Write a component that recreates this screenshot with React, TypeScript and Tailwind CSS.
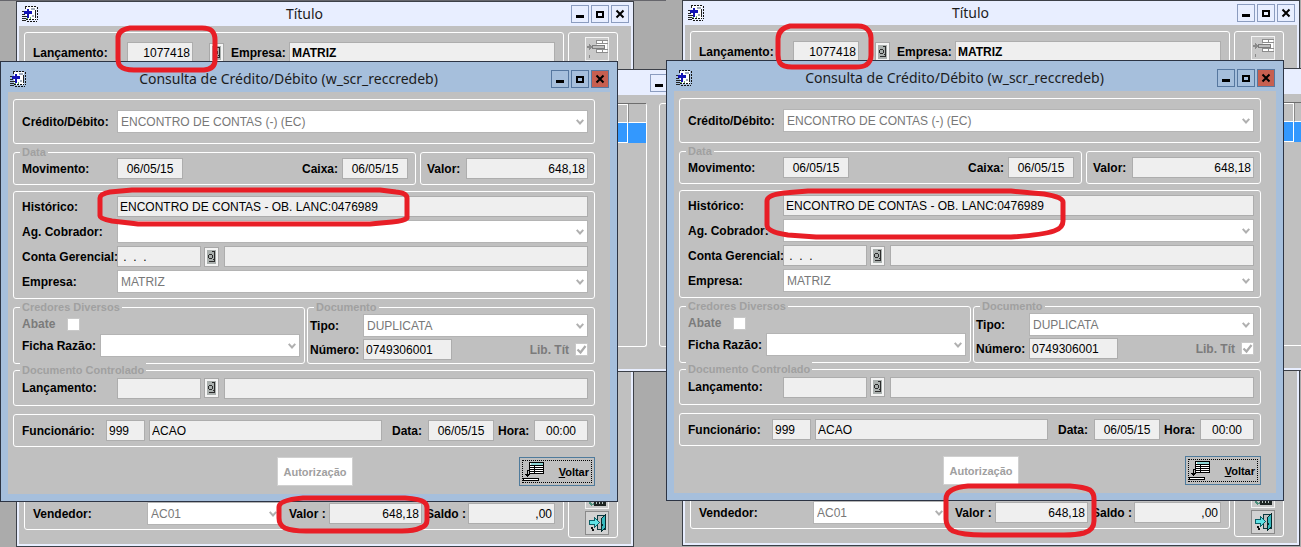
import { useId, type ReactNode } from "react";
import clsx from "clsx";

const labelText = "text-xs leading-4 font-bold whitespace-nowrap";

function AppIcon() {
  return (
    <svg width="16" height="16" viewBox="0 0 16 16" shapeRendering="crispEdges" aria-hidden="true">
      <path d="M4 1h10v13H4z" fill="#fff" />
      <path
        d="M3 .5h12M15.500 1v13M5 15.500h10M4 13.500h10"
        stroke="#111"
        strokeWidth="1"
        strokeDasharray="2 1"
        fill="none"
      />
      <path d="M3.500 0v3M13.500 4v8M0 5.500h3M0 8.500h3M0 10.500h5M0 12.500h5M0 14.500h4" stroke="#222" fill="none" />
      <path d="M5 3h2v2h3v3H7v4H5V8H2V5h3z" fill="#1414b4" />
      <path d="M9 2h4v2H9zM10 9h2v2h-2z" fill="#a3adbb" />
      <path d="M4 12h2v1H4zM8 11h1v2H8z" fill="#6cae72" />
    </svg>
  );
}

function SearchGlyph() {
  return (
    <svg width="9" height="14" viewBox="0 0 9 14" shapeRendering="crispEdges" aria-hidden="true">
      <path d="M0 0h9v14H0z" fill="#aab0ae" />
      <path d="M2 4h3v1H2zM1 5h1v3H1zM2 8h3v1H2zM5 5h1v3H5zM5 1h3v1H5zM7 2h1v9H7zM2 11h6v1H2zM6 9h1v1H6z" fill="#2b2b2b" />
    </svg>
  );
}

function InsertRowGlyph() {
  return (
    <svg width="21" height="20" viewBox="0 0 21 20" shapeRendering="crispEdges" aria-hidden="true">
      <path d="M10 1h10v12H10z" fill="#fff" />
      <path d="M9.500 1.500h11M9.500 4.500h11M9.500 10.500h11M9.500 13.500h11M9.500 1v4M15.500 1v4M9.500 10v4M15.500 10v4" stroke="#8d8d8d" fill="none" />
      <path d="M5.500 6.500h12v3h-12z" fill="#c0c0c0" stroke="#7d7d7d" />
      <path d="M0 7h2V5h1v1h1v1h1v2H4v1H3v1H2V9H0zM2 16h1v3H2z" fill="#8a8a8a" />
    </svg>
  );
}

function ReturnGlyph() {
  return (
    <svg width="22" height="20" viewBox="0 0 22 20" shapeRendering="crispEdges" aria-hidden="true">
      <path d="M7 1h14v11H7z" fill="#fff" />
      <path d="M8 1h12v2H8z" fill="#8fd6d6" />
      <path d="M6.500 .5h14v11h-14zM7 3.500h14M7 5.500h14M7 7.500h14M7 9.500h14M11.500 3v9" stroke="#000" fill="none" />
      <path d="M7 8.500H4.500V14" stroke="#000" fill="none" />
      <path d="M2 12h5v1H6v1H5v1H4v-1H3v-1H2z" fill="#000" />
      <path d="M.5 16.500h15v2H.5z" fill="#fff" stroke="#000" />
    </svg>
  );
}

function DoorGlyph() {
  return (
    <svg width="19" height="19" viewBox="0 0 19 19" shapeRendering="crispEdges" aria-hidden="true">
      <path d="M9.500 1.500h8v14h-8z" fill="#c0c0c0" stroke="#0b3a40" />
      <path d="M13 5l4-4v13l-4 4z" fill="#35b9bd" stroke="#05282c" />
      <path d="M14 10h1v2h-1z" fill="#05282c" />
      <path d="M1.500 6.500h5v-3l5 5-5 5v-3h-5z" fill="#5fe3e6" stroke="#0c5f66" />
      <path d="M3 13h2v2H3zM4 15h2v2H4z" fill="#111" />
    </svg>
  );
}

function PrintGlyph() {
  return (
    <svg width="19" height="19" viewBox="0 0 19 19" shapeRendering="crispEdges" aria-hidden="true">
      <path d="M2 2h14v9H2z" fill="#fff" stroke="#555" />
      <path d="M6 12h12v6H6z" fill="#1d2422" />
      <path d="M8 13h1v3H8zM11 13h1v3h-1zM14 13h1v3h-1z" fill="#b8c4c2" />
      <path d="M1 13h1v1h1v1h1v1h1v-1h1v2H4v1H3v-1H2v-1H1z" fill="#4f8f7c" />
    </svg>
  );
}

type CaptionKind = "min" | "max" | "close";

function CaptionButton({ kind, active }: { kind: CaptionKind; active?: boolean }) {
  const names = { min: "Minimizar", max: "Maximizar", close: "Fechar" };
  return (
    <button
      type="button"
      aria-label={names[kind]}
      className={clsx(
        "flex size-[18px] shrink-0 items-center justify-center border",
        active ? "border-[#56779f]" : "border-[#8b9cbf]",
        active && kind === "close" && "bg-[#c75f50]",
      )}
    >
      <svg width="10" height="10" viewBox="0 0 10 10" aria-hidden="true">
        {kind === "min" && <path d="M1 6h8v3H1z" />}
        {kind === "max" && <path d="M1 2h8v7H1zM3 4v3h4V4z" fillRule="evenodd" />}
        {kind === "close" && <path d="M1.500 1.500l7 7M8.500 1.500l-7 7" stroke="#000" strokeWidth="2" />}
      </svg>
    </button>
  );
}

function CaptionBar({ title, active }: { title: string; active?: boolean }) {
  return (
    <header
      className={clsx(
        "flex shrink-0 items-center",
        active ? "h-[30px] bg-[#a6bfdc] pt-1 pr-2 pl-[9px]" : "h-6 bg-[#e8eeff] pr-1 pl-[5px]",
      )}
    >
      <AppIcon />
      <h2 className="flex-1 text-center font-['Noto_Sans',sans-serif] text-sm leading-5 text-[#1c1c1c]">{title}</h2>
      <div className="flex gap-0.5">
        <CaptionButton kind="min" active={active} />
        <CaptionButton kind="max" active={active} />
        <CaptionButton kind="close" active={active} />
      </div>
    </header>
  );
}

function Group({ legend, className, children }: { legend?: string; className?: string; children?: ReactNode }) {
  return (
    <div role="group" aria-label={legend} className={clsx("relative min-w-0 rounded-[3px] border border-white", className)}>
      {legend && (
        <span className="absolute -top-2 left-1.5 bg-[#c0c0c0] px-0.5 text-[11px] leading-[14px] font-bold whitespace-nowrap text-[#a0a0a0]">
          {legend}
        </span>
      )}
      {children}
    </div>
  );
}

interface FieldProps {
  label?: string;
  name?: string;
  value?: string;
  labelClass?: string;
  boxClass?: string;
  className?: string;
}

function TextField({ label, name, value = "", labelClass, boxClass, className }: FieldProps) {
  const id = useId();
  return (
    <div className={clsx("flex min-w-0 items-center", className)}>
      {label && (
        <label htmlFor={id} className={clsx(labelText, "shrink-0", labelClass)}>
          {label}
        </label>
      )}
      <input
        id={id}
        aria-label={label ? undefined : name}
        readOnly
        defaultValue={value}
        className={clsx(
          "h-[21px] min-w-0 border border-[#adadad] bg-[#efefef] px-0.5 text-xs leading-4 outline-none",
          boxClass,
        )}
      />
    </div>
  );
}

function SelectField({ label, value = "", labelClass, boxClass, className }: FieldProps) {
  const id = useId();
  return (
    <div className={clsx("flex min-w-0 items-center", className)}>
      <label htmlFor={id} className={clsx(labelText, "shrink-0", labelClass)}>
        {label}
      </label>
      <div className={clsx("relative min-w-0", boxClass)}>
        <select
          id={id}
          defaultValue={value}
          className="block h-[23px] w-full appearance-none border border-[#b4b4b4] bg-white px-[3px] font-['Liberation_Sans',Arial,sans-serif] text-xs leading-4 text-[#787878] outline-none"
        >
          <option value={value}>{value}</option>
        </select>
        <svg
          width="8"
          height="6"
          viewBox="0 0 8 6"
          className="pointer-events-none absolute top-[9px] right-1"
          aria-hidden="true"
        >
          <path d="M.7 .8L4 4.500 7.300 .8" stroke="#b0b0b0" strokeWidth="2" fill="none" />
        </svg>
      </div>
    </div>
  );
}

function LookupButton() {
  return (
    <button
      type="button"
      aria-label="Pesquisar"
      className="flex h-5 w-[15px] shrink-0 items-center justify-center border border-[#a8a8a8] bg-[#f4f4f4]"
    >
      <SearchGlyph />
    </button>
  );
}

function CheckField({ label, checked, className }: { label: string; checked?: boolean; className: string }) {
  const id = useId();
  return (
    <div className={clsx("flex items-center", className)}>
      <label htmlFor={id} className={clsx(labelText, "text-[#7b7b7b]")}>
        {label}
      </label>
      <span className="relative block size-[13px]">
        <input
          id={id}
          type="checkbox"
          defaultChecked={checked}
          className="block size-[13px] appearance-none border border-[#c9c9c9] bg-white"
        />
        {checked && (
          <svg width="13" height="13" viewBox="0 0 13 13" className="pointer-events-none absolute inset-0" aria-hidden="true">
            <path d="M2.500 6.500l3 3 5-6.500" stroke="#ababab" strokeWidth="2.200" fill="none" />
          </svg>
        )}
      </span>
    </div>
  );
}

function SideButton({ name, raised, children }: { name: string; raised?: boolean; children: ReactNode }) {
  return (
    <button
      type="button"
      aria-label={name}
      className={clsx(
        "flex size-6 items-center justify-center border",
        raised ? "border-[#8a8a8a] bg-[#d2d2d2]" : "border-[#f4f4f4] bg-[#c9c9c9]",
      )}
    >
      {children}
    </button>
  );
}

function TitleWindow() {
  return (
    <section className="absolute top-px left-4 flex h-[546px] w-[618px] flex-col border border-[#3c4048] bg-[#e8eeff]">
      <CaptionBar title="Título" />
      <div className="mx-0.5 mb-0.5 flex flex-1 gap-1 bg-[#c0c0c0] pt-1.5 pr-[13px] pb-1.5 pl-[5px]">
        <Group className="mb-2 flex flex-1 flex-col justify-between pt-[9px] pr-2 pb-1 pl-2">
          <div className="flex items-center">
            <TextField label="Lançamento:" value="1077418" labelClass="w-[94px]" boxClass="w-[66px] text-right" />
            <div className="ml-4 flex">
              <LookupButton />
            </div>
            <TextField
              label="Empresa:"
              value="MATRIZ"
              className="ml-[7px] flex-1"
              labelClass="w-[58px]"
              boxClass="flex-1 font-bold"
            />
          </div>
          <div className="flex items-center">
            <SelectField label="Vendedor:" value="AC01" labelClass="w-[114px]" boxClass="w-[134px]" />
            <TextField
              label="Valor :"
              value="648,18"
              className="ml-2"
              labelClass="w-10"
              boxClass="w-[93px] text-right"
            />
            <TextField
              label="Saldo :"
              value=",00"
              className="ml-1 flex-1"
              labelClass="w-[42px]"
              boxClass="flex-1 text-right"
            />
          </div>
        </Group>
        <Group className="flex w-[50px] flex-col items-center justify-between pt-1 pb-0.5 pl-2">
          <SideButton name="Inserir">
            <InsertRowGlyph />
          </SideButton>
          <div className="flex flex-col gap-0.5">
            <SideButton name="Imprimir">
              <PrintGlyph />
            </SideButton>
            <SideButton name="Sair" raised>
              <DoorGlyph />
            </SideButton>
          </div>
        </Group>
      </div>
    </section>
  );
}

function ListWindow() {
  return (
    <section className="absolute top-[69px] left-[400px] flex h-[303px] w-[300px] flex-col border border-[#3c4048] bg-[#c0c0c0]">
      <header className="flex h-[25px] shrink-0 items-center justify-end bg-[#e8eeff] pr-[31px]">
        <CaptionButton kind="min" />
      </header>
      <div className="flex flex-1 gap-3 border-b-2 border-[#e8eeff] pt-2 pb-[22px]">
        <div className="w-[246px] rounded-[3px] border-r border-b border-white">
          <div className="flex h-5 border-t border-[#6e6e6e]">
            <div className="w-[227px] border-t border-r border-b border-white" />
            <div className="flex-1 border-b border-l border-b-white border-l-[#8a8a8a]" />
          </div>
          <div className="flex h-5 bg-[#3398fe]">
            <div className="w-[227px] border-r border-b border-white" />
          </div>
        </div>
        <Group className="flex-1" />
      </div>
    </section>
  );
}

function DetailDialog() {
  return (
    <section className="absolute top-[61px] left-0 flex h-[441px] w-[618px] flex-col border border-[#2c3444] bg-[#a6bfdc]">
      <CaptionBar title="Consulta de Crédito/Débito (w_scr_reccredeb)" active />
      <div className="mx-[7px] mb-[7px] flex flex-1 flex-col bg-[#c0c0c0] pt-[7px] pr-[15px] pl-[5px]">
        <Group className="flex h-[45px] items-center pr-[6px] pl-2">
          <SelectField
            label="Crédito/Débito:"
            value="ENCONTRO DE CONTAS (-) (EC)"
            className="flex-1"
            labelClass="w-[95px]"
            boxClass="flex-1"
          />
        </Group>
        <div className="mt-2 flex gap-1">
          <Group legend="Data" className="flex h-[33px] flex-1 items-center justify-between pr-[7px] pl-2">
            <TextField label="Movimento:" value="06/05/15" labelClass="w-[95px]" boxClass="w-[66px] text-center" />
            <TextField label="Caixa:" value="06/05/15" labelClass="w-10" boxClass="w-[66px] text-center" />
          </Group>
          <Group className="flex h-[33px] w-[175px] items-center pr-[6px] pl-1.5">
            <TextField label="Valor:" value="648,18" className="flex-1" labelClass="w-[39px]" boxClass="flex-1 text-right" />
          </Group>
        </div>
        <Group className="mt-1.5 flex h-[108px] flex-col gap-[3px] pt-1 pr-[6px] pl-2">
          <TextField
            label="Histórico:"
            value="ENCONTRO DE CONTAS - OB. LANC:0476989"
            labelClass="w-[95px]"
            boxClass="flex-1"
          />
          <SelectField label="Ag. Cobrador:" labelClass="w-[95px]" boxClass="flex-1" />
          <div className="flex items-center gap-[3px]">
            <TextField label="Conta Gerencial:" value=" .  .  ." labelClass="w-[95px]" boxClass="w-[84px]" />
            <LookupButton />
            <TextField name="Descrição da conta" className="ml-0.5 flex-1" boxClass="w-full" />
          </div>
          <SelectField label="Empresa:" value="MATRIZ" labelClass="w-[95px]" boxClass="flex-1" />
        </Group>
        <div className="mt-2 flex gap-0.5">
          <Group legend="Credores Diversos" className="h-[57px] flex-1 pt-2 pr-1 pl-2">
            <CheckField label="Abate" className="gap-3" />
            <SelectField label="Ficha Razão:" className="mt-0.5" labelClass="w-[78px]" boxClass="flex-1" />
          </Group>
          <Group legend="Documento" className="flex h-[57px] flex-1 flex-col gap-0.5 pt-1.5 pr-[6px] pl-0.5">
            <SelectField label="Tipo:" value="DUPLICATA" labelClass="w-[53px]" boxClass="flex-1" />
            <div className="flex items-center justify-between">
              <TextField label="Número:" value="0749306001" labelClass="w-[53px]" boxClass="w-[89px]" />
              <CheckField label="Lib. Tít" checked className="gap-1.5" />
            </div>
          </Group>
        </div>
        <Group legend="Documento Controlado" className="mt-1.5 flex h-9 items-center gap-[3px] pr-[6px] pl-2">
          <TextField label="Lançamento:" labelClass="w-[95px]" boxClass="w-[84px]" />
          <LookupButton />
          <TextField name="Descrição do lançamento" className="ml-0.5 flex-1" boxClass="w-full" />
        </Group>
        <Group className="mt-2 flex h-[33px] items-center pr-[6px] pl-2">
          <TextField label="Funcionário:" value="999" labelClass="w-[84px]" boxClass="w-[39px]" />
          <TextField name="Nome do funcionário" value="ACAO" className="ml-1 flex-1" boxClass="w-full" />
          <TextField
            label="Data:"
            value="06/05/15"
            className="ml-2.5"
            labelClass="w-9"
            boxClass="w-[66px] text-center"
          />
          <TextField label="Hora:" value="00:00" className="ml-1" labelClass="w-9" boxClass="w-[54px] text-center" />
        </Group>
        <div className="mt-2.5 flex justify-between pl-[264px]">
          <button
            type="button"
            className="h-[29px] w-[76px] border border-[#d0d0d0] bg-white text-[11px] leading-4 font-bold text-[#a0a0a0]"
          >
            Autorização
          </button>
          <button type="button" className="h-[29px] w-[76px] border border-[#4f7b9c] bg-[#c0c0c0] p-0.5">
            <span className="flex h-full items-center justify-between border border-dotted border-black pr-0.5 text-[11px] leading-4 font-bold">
              <ReturnGlyph />
              <span>
                <span className="underline">V</span>oltar
              </span>
            </span>
          </button>
        </div>
      </div>
    </section>
  );
}

function Marks({ paths }: { paths: string[] }) {
  return (
    <svg
      width="666"
      height="547"
      viewBox="0 0 666 547"
      className="pointer-events-none absolute top-0 left-0"
      aria-hidden="true"
    >
      {paths.map((d) => (
        <path key={d} d={d} stroke="#e81e26" strokeWidth="5" strokeLinejoin="round" fill="none" />
      ))}
    </svg>
  );
}

const leftMarks = [
  "M130 28H202Q209 28 212 31Q215 34 215 40V60Q215 69 204 70H134Q124 70 120 66Q118 64 118 58V38Q118 30 130 28Z",
  "M132 190H380L396 192Q407 193 407 198V218Q404 221 392 222L370 224H138L112 221Q100 219 100 216V198Q100 194 110 192Z",
  "M303 498H405Q420 499 424 502Q427 504 427 508V520Q427 526 420 528Q414 531 402 531H306Q292 531 285 528Q279 525 279 518V507Q279 500 303 498Z",
];

const rightMarks = [
  "M124 27H192Q199 27 202 31Q205 34 205 39V56Q205 63 200 66Q197 68 190 68H126Q117 68 114 64Q112 61 112 56V40Q112 30 124 27Z",
  "M142 192H345L378 195Q397 198 397 203V222Q397 229 388 232Q376 236 345 238H150L122 236Q101 233 101 226V202Q101 196 118 194Z",
  "M302 487H404Q418 488 424 491Q428 494 428 500V522Q428 531 418 534Q410 536 398 536H318Q296 536 287 532Q280 528 280 520V500Q280 489 302 487Z",
];

function Desktop({ marks, className }: { marks: string[]; className?: string }) {
  return (
    <div className={clsx("relative h-[548px] overflow-hidden", className)}>
      <TitleWindow />
      <ListWindow />
      <DetailDialog />
      <Marks paths={marks} />
    </div>
  );
}

export default function App() {
  return (
    <main className="grid h-screen min-w-[1301px] grid-cols-[666fr_635fr] overflow-hidden bg-[#ababab] font-['Liberation_Sans',Arial,sans-serif] text-black">
      <Desktop marks={leftMarks} className="border-t border-[#66666c] [&>*]:-mt-px" />
      <Desktop marks={rightMarks} className="-mt-px" />
    </main>
  );
}
